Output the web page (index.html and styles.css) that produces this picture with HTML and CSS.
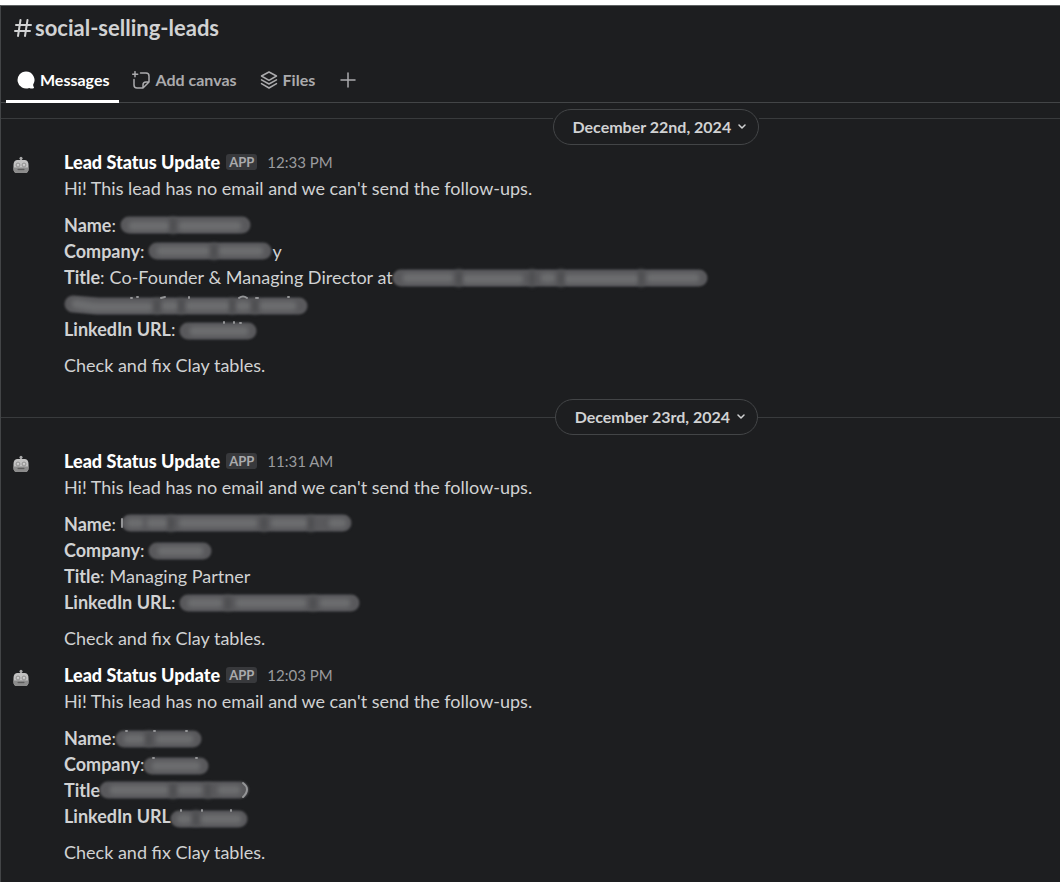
FILE: index.html
```html
<!DOCTYPE html>
<html lang="en">
<head>
<meta charset="utf-8">
<meta name="viewport" content="width=device-width, initial-scale=1">
<title>social-selling-leads</title>
<link rel="stylesheet" href="styles.css">
</head>
<body>
<svg class="defs" aria-hidden="true">
  <symbol id="robot" viewBox="0 0 16 18">
    <path fill="#999" d="M7 3h2v3H7z"/><circle cx="8" cy="2.300" r="1.500" fill="#aaa"/>
    <path fill="#c2c2c2" d="M4 4h8q3.500.5 3.500 5v4q0 4-3.500 4H4q-3.500 0-3.500-4V9Q.5 4.500 4 4z"/>
    <path fill="#8c8c8c" d="M.5 11.500h15V13q0 4-3.500 4H4q-3.500 0-3.500-4z"/>
    <circle cx="5" cy="9" r="1.900" fill="#e8e8e8" stroke="#777" stroke-width=".8"/><circle cx="11" cy="9" r="1.900" fill="#e8e8e8" stroke="#777" stroke-width=".8"/>
    <circle cx="5" cy="9" r=".6" fill="#666"/><circle cx="11" cy="9" r=".6" fill="#666"/>
    <path fill="none" d="M4.500 13.500h7M6 12.700v1.600M8 12.700v1.600M10 12.700v1.600" stroke="#555" stroke-width=".8"/>
  </symbol>
</svg>
<div class="app">
  <header class="channel">
    <h1 class="title">
      <svg class="hash" width="18" height="18" viewBox="0 0 18 18" aria-hidden="true"><path d="M6.500 1 4 17M13.500 1 11 17M2 6h15M1 12h15"/></svg>
      social-selling-leads
    </h1>
    <nav class="tabs">
      <button class="tab active" type="button">
        <svg width="18" height="18" viewBox="0 0 18 18" aria-hidden="true"><path fill="currentColor" d="M9 .5a8.500 8.500 0 1 0 3.200 16.400q2.500.9 4.300.3.800-.3.300-1.100-.8-1.200-.6-2.600A8.500 8.500 0 0 0 9 .5z"/></svg>
        Messages
      </button>
      <button class="tab" type="button">
        <svg width="18" height="18" viewBox="0 0 18 18" aria-hidden="true"><path d="M8.500 2H14q3 0 3 3v6l-6 6H5q-3 0-3-3V8.500M11 17v-3q0-3 3-3h3M3 .7v5M.7 3.200h5"/></svg>
        Add canvas
      </button>
      <button class="tab" type="button">
        <svg width="18" height="18" viewBox="0 0 18 18" aria-hidden="true"><path d="M9 1 1.500 5 9 9.300 16.500 5zM1.500 8.800 9 13l7.500-4.200M1.500 12.600 9 17l7.500-4.400"/></svg>
        Files
      </button>
      <button class="tab" type="button" aria-label="Add tab">
        <svg width="20" height="18" viewBox="0 0 20 18" aria-hidden="true"><path d="M10 2v14M3 9h14"/></svg>
      </button>
    </nav>
  </header>

  <main class="feed">
    <div class="day pinned">
      <button class="date" type="button">December 22nd, 2024
        <svg width="8" height="6" viewBox="0 0 8 6" aria-hidden="true"><path d="m1 1 3 3 3-3"/></svg>
      </button>
    </div>

    <article class="message">
      <svg class="avatar" width="16" height="18" aria-hidden="true"><use href="#robot"/></svg>
      <div class="content">
        <div class="meta"><span class="name">Lead Status Update</span><span class="badge">APP</span><time class="time">12:33 PM</time></div>
        <p>Hi! This lead has no email and we can't send the follow-ups.</p>
        <dl class="fields">
          <div class="row"><dt><b>Name</b>:</dt><dd class="spaced"><svg class="smudge" width="132" height="24" aria-hidden="true"><path class="base" d="M10 12H123"/><path class="glow" d="M14 13H46M64 13H118"/><path class="dim" d="M54 6v13"/></svg></dd></div>
          <div class="row"><dt><b>Company</b>:</dt><dd class="spaced"><svg class="smudge" width="125" height="24" aria-hidden="true"><path class="base" d="M10 12H116"/><path class="glow" d="M14 12H58M76 12H112"/><path class="dim" d="M67 6v13"/></svg>y</dd></div>
          <div class="row"><dt><b>Title</b>:</dt><dd class="spaced">Co-Founder &amp; Managing Director at<svg class="smudge" width="320" height="24" aria-hidden="true"><path class="base" d="M10 13H308"/><path class="glow" d="M16 13H58M76 14H128M154 13H160M178 14H244M260 13H304"/><path class="dim" d="M68 6v14M141 6v14M170 6v14M250 6v14"/></svg></dd></div>
          <div class="row"><dd><svg class="smudge" width="250" height="24" aria-hidden="true"><path class="base" d="M11 13 36 15H237"/><path class="glow" d="M14 13 32 16H86M104 15H112M128 15H164M178 15H184M202 15H230"/><path class="dim" d="M95 9v12M119 9v12M170 9v12M193 9v12"/><path class="peek" d="M69 7h1M75 6h1M99 7l4-1M127 6v1M177 7q4-3 8 0M194 7h2M226 6h1"/></svg></dd></div>
          <div class="row"><dt><b>LinkedIn URL</b>:</dt><dd class="spaced"><svg class="smudge" width="84" height="24" aria-hidden="true"><path class="base" d="M10 14H70"/><path class="glow" d="M16 14H66"/><path class="peek" d="M46 5v1M56 5v1M62 6h1"/></svg></dd></div>
        </dl>
        <p>Check and fix Clay tables.</p>
      </div>
    </article>

    <div class="day">
      <button class="date" type="button">December 23rd, 2024
        <svg width="8" height="6" viewBox="0 0 8 6" aria-hidden="true"><path d="m1 1 3 3 3-3"/></svg>
      </button>
    </div>

    <article class="message">
      <svg class="avatar" width="16" height="18" aria-hidden="true"><use href="#robot"/></svg>
      <div class="content">
        <div class="meta"><span class="name">Lead Status Update</span><span class="badge">APP</span><time class="time">11:31 AM</time></div>
        <p>Hi! This lead has no email and we can't send the follow-ups.</p>
        <dl class="fields">
          <div class="row"><dt><b>Name</b>:</dt><dd class="spaced"><svg class="smudge" width="236" height="24" aria-hidden="true"><path class="base" d="M11 11H190L224 11"/><path class="glow" d="M12 11H20M32 11H44M64 11H134M156 11H184M214 11H223"/><path class="dim" d="M52 5v13M145 5v13M192 5v13"/><path class="peek" d="M3 7v8"/></svg></dd></div>
          <div class="row"><dt><b>Company</b>:</dt><dd class="spaced"><svg class="smudge" width="68" height="24" aria-hidden="true"><path class="base" d="M10 13H56"/><path class="glow" d="M15 13H52"/></svg></dd></div>
          <div class="row"><dt><b>Title</b>:</dt><dd class="spaced">Managing Partner</dd></div>
          <div class="row"><dt><b>LinkedIn URL</b>:</dt><dd class="spaced"><svg class="smudge" width="184" height="24" aria-hidden="true"><path class="base" d="M10 13H173"/><path class="glow" d="M14 13H40M62 13H124M146 13H168"/><path class="dim" d="M50 7v12M135 7v12"/></svg></dd></div>
        </dl>
        <p>Check and fix Clay tables.</p>
      </div>
    </article>

    <article class="message">
      <svg class="avatar" width="16" height="18" aria-hidden="true"><use href="#robot"/></svg>
      <div class="content">
        <div class="meta"><span class="name">Lead Status Update</span><span class="badge">APP</span><time class="time">12:03 PM</time></div>
        <p>Hi! This lead has no email and we can't send the follow-ups.</p>
        <dl class="fields">
          <div class="row"><dt><b>Name</b>:</dt><dd><svg class="smudge" width="94" height="24" aria-hidden="true"><path class="base" d="M10 13H79"/><path class="glow" d="M14 13H26M46 13H75"/><path class="dim" d="M35 7v12"/><path class="peek" d="M12 5h1M40 5h1M72 5h1"/></svg></dd></div>
          <div class="row"><dt><b>Company</b>:</dt><dd><svg class="smudge" width="72" height="24" aria-hidden="true"><path class="base" d="M10 14H58"/><path class="glow" d="M14 14H54"/><path class="peek" d="M11 6h1M54 6h1"/></svg></dd></div>
          <div class="row"><dt><b>Title</b></dt><dd><svg class="smudge" width="156" height="24" aria-hidden="true"><path class="base" d="M10 12H142"/><path class="glow" d="M16 12H66M84 12H100M124 12H138"/><path class="dim" d="M75 7v12M110 7v12"/><path class="peek" d="M145 5q8 6 0 14"/></svg></dd></div>
          <div class="row"><dt><b>LinkedIn URL</b></dt><dd><svg class="smudge" width="88" height="24" aria-hidden="true"><path class="base" d="M10 15H70"/><path class="glow" d="M12 15H18M36 15H68"/><path class="dim" d="M27 8v12"/><path class="peek" d="M12 6v1M33 6v1M62 6v1"/></svg></dd></div>
        </dl>
        <p>Check and fix Clay tables.</p>
      </div>
    </article>
  </main>
</div>
</body>
</html>
```
FILE: styles.css
```css
* { box-sizing: border-box; }
body {
  margin: 0;
  background: #fff;
  color: #d1d2d3;
  font: 18px/26px Lato, "Liberation Sans", sans-serif;
}
.defs { display: none; }
.app {
  min-height: calc(100vh - 5px);
  margin-top: 5px;
  background: #1d1e20;
  border-top: 1px solid #5d6162;
  border-left: 1px solid #434547;
}
svg path:not([fill]) { fill: none; }
p, dl, dd, h1 { margin: 0; }
button {
  font: inherit;
  color: inherit;
  background: none;
  border: 0;
  padding: 0;
  cursor: pointer;
}

.channel { border-bottom: 1px solid #434547; }
.title {
  display: flex;
  align-items: center;
  gap: 3px;
  padding: 8px 13px;
  font-size: 22px;
  line-height: 28px;
  font-weight: 700;
}
.hash path { stroke: currentColor; stroke-width: 2; stroke-linecap: round; }
.tabs { display: flex; padding: 0 5px; gap: 2px; }
.tab {
  display: flex;
  align-items: center;
  gap: 5px;
  height: 53px;
  padding: 9px 10px 0 11px;
  font-size: 16px;
  font-weight: 700;
  color: #ababad;
  border-bottom: 3px solid transparent;
  margin-bottom: -1px;
}
.tab path:not([fill]) { stroke: currentColor; stroke-width: 1.5; stroke-linecap: round; stroke-linejoin: round; }
.tab.active { color: #fff; border-bottom-color: #fff; }

.feed { padding-bottom: 12px; }
.day { display: flex; align-items: center; margin: 21px 0 13px; }
.day::before, .day::after { content: ""; height: 1px; background: #393b3d; }
.day::before { flex: 11; }
.day::after { flex: 6; }
.pinned { align-items: flex-start; margin: 6px 0 4px; }
.pinned::before, .pinned::after { margin-top: 9px; }
.date {
  display: flex;
  align-items: center;
  gap: 7px;
  height: 36px;
  padding: 0 12px 0 19px;
  border: 1px solid #434547;
  border-radius: 18px;
  font-size: 16px;
  font-weight: 700;
}
.date svg path { stroke: currentColor; stroke-width: 1.5; stroke-linecap: round; stroke-linejoin: round; }

.message { display: grid; grid-template-columns: 51px 1fr; padding-left: 12px; }
.message + .message { margin-top: 11px; }
.avatar { margin-top: 7px; }
.meta { display: flex; align-items: center; }
.name { color: #fff; font-weight: 900; }
.badge {
  margin: 0 10px 0 6px;
  padding: 0 3px;
  border-radius: 3px;
  background: #38393c;
  color: #ababad;
  font-size: 13px;
  line-height: 16px;
  font-weight: 700;
}
.time { color: #9a9b9e; font-size: 15px; }
.fields { margin: 11px 0 10px; }
.row { display: flex; height: 26px; }
.row dd { display: flex; align-items: center; }
.row .spaced { padding-left: 5px; }

.smudge { flex: none; margin-left: -2px; overflow: visible; }
.smudge path { stroke-linecap: round; stroke-linejoin: round; }
.smudge .base { stroke: #59595c; stroke-width: 17; filter: blur(1px); }
.smudge .glow { stroke: #6c6d6f; stroke-width: 9; filter: blur(2px); }
.smudge .dim { stroke: #4b4c4e; stroke-width: 4; filter: blur(2px); }
.smudge .peek { stroke: #949597; stroke-width: 2; }
```
